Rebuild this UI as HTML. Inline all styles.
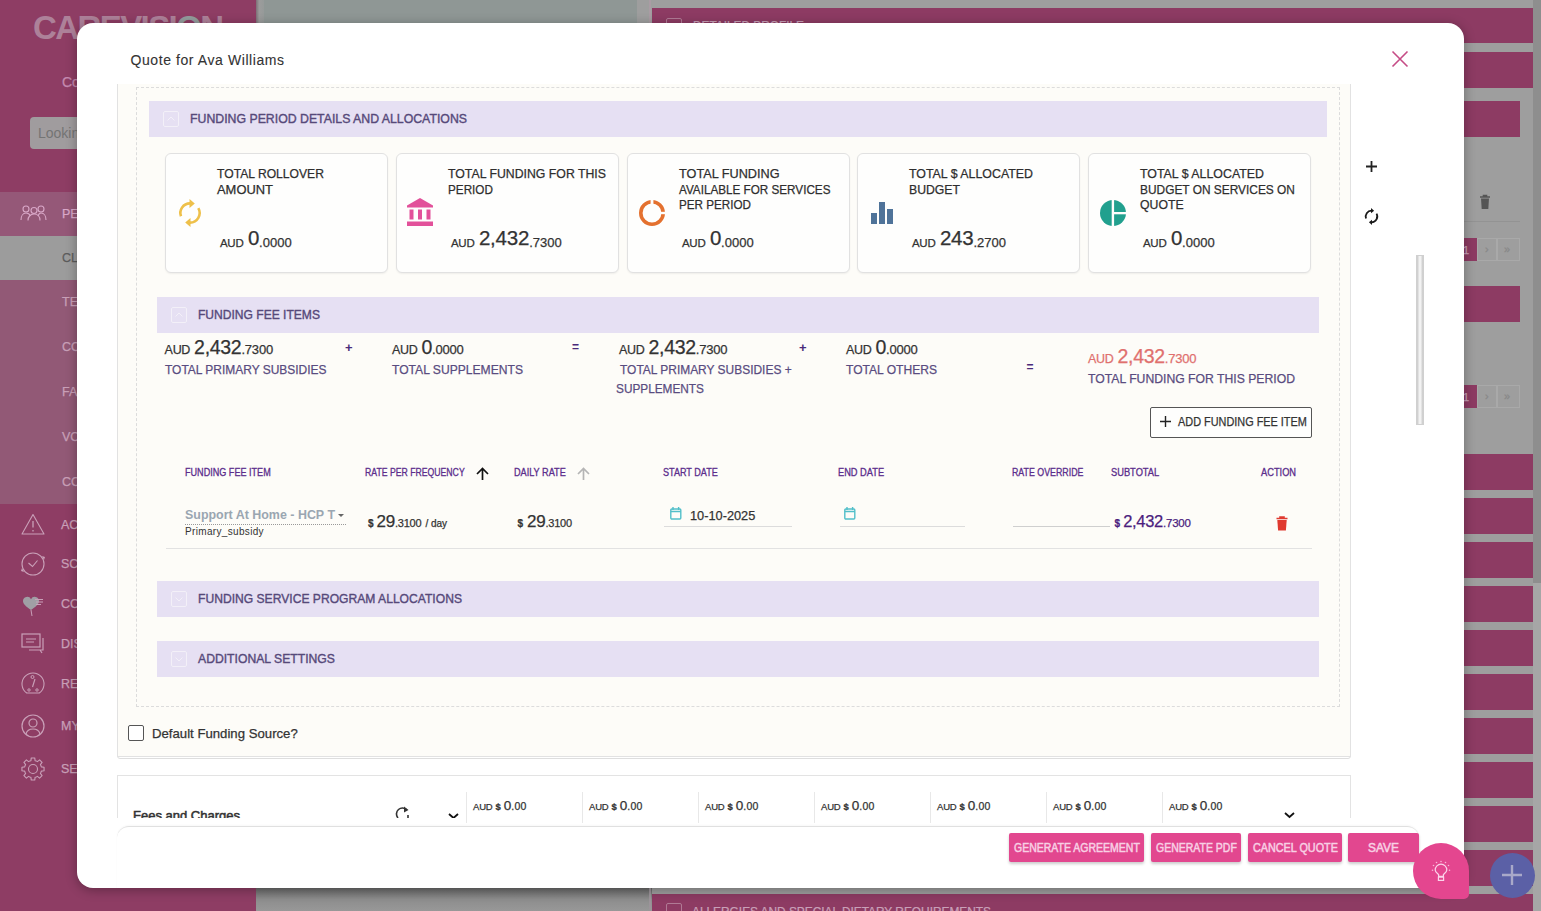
<!DOCTYPE html>
<html><head><meta charset="utf-8">
<style>
*{box-sizing:border-box;margin:0;padding:0}
html,body{width:1541px;height:911px;overflow:hidden}
body{position:relative;background:#9e9e9e;font-family:"Liberation Sans",sans-serif;color:#333}
.a{position:absolute}
svg.a{overflow:visible}
.t{position:absolute;white-space:nowrap;line-height:1;-webkit-text-stroke:0.25px currentColor}
.mt{position:absolute;white-space:nowrap;display:flex;align-items:baseline;line-height:1;-webkit-text-stroke:0.25px currentColor}
</style></head>
<body>
<div class="a" style="left:0px;top:0px;width:256px;height:911px;background:#8e3d64"></div>
<div class="a" style="left:0px;top:192px;width:256px;height:44px;background:#955878"></div>
<div class="a" style="left:0px;top:236px;width:256px;height:44px;background:#9c9c9c"></div>
<div class="a" style="left:0px;top:280px;width:256px;height:224px;background:#925976"></div>
<div class="a" style="left:256px;top:0px;width:381px;height:911px;background:#8f9795"></div>
<div class="a" style="left:256px;top:0px;width:8px;height:911px;background:linear-gradient(90deg,#7d6f76,#9c9c9c 40%,#969a99)"></div>
<div class="a" style="left:637px;top:0px;width:904px;height:911px;background:#9e9e9e"></div>
<div class="a" style="left:1533px;top:0px;width:8px;height:583px;background:#8e8e8e"></div>
<div class="a" style="left:1533px;top:583px;width:8px;height:328px;background:#a6a6a6"></div>
<div class="a" style="left:652px;top:8px;width:881px;height:35px;background:#8d3b63"></div>
<div class="a" style="left:652px;top:52px;width:881px;height:36px;background:#8d3b63"></div>
<div class="a" style="left:652px;top:101px;width:868px;height:36px;background:#8d3b63"></div>
<div class="a" style="left:652px;top:286px;width:868px;height:36px;background:#8d3b63"></div>
<div class="a" style="left:652px;top:221px;width:868px;height:1px;background:#939393"></div>
<div class="a" style="left:652px;top:454px;width:881px;height:36px;background:#8d3b63"></div>
<div class="a" style="left:652px;top:498px;width:881px;height:36px;background:#8d3b63"></div>
<div class="a" style="left:652px;top:542px;width:881px;height:36px;background:#8d3b63"></div>
<div class="a" style="left:652px;top:586px;width:881px;height:36px;background:#8d3b63"></div>
<div class="a" style="left:652px;top:630px;width:881px;height:36px;background:#8d3b63"></div>
<div class="a" style="left:652px;top:674px;width:881px;height:36px;background:#8d3b63"></div>
<div class="a" style="left:652px;top:718px;width:881px;height:36px;background:#8d3b63"></div>
<div class="a" style="left:652px;top:762px;width:881px;height:36px;background:#8d3b63"></div>
<div class="a" style="left:652px;top:806px;width:881px;height:36px;background:#8d3b63"></div>
<div class="a" style="left:652px;top:850px;width:881px;height:36px;background:#8d3b63"></div>
<div class="a" style="left:652px;top:894px;width:881px;height:36px;background:#8d3b63"></div>
<div class="a" style="left:256px;top:888px;width:396px;height:23px;background:linear-gradient(180deg,#6a6a6a,#8d8d8d 50%,#989898)"></div>
<div class="a" style="left:649px;top:0px;width:2px;height:23px;background:#aa9ca4"></div>
<div class="a" style="left:649px;top:888px;width:2px;height:23px;background:#9c949a"></div>
<div class="a" style="left:666px;top:18px;width:16px;height:16px;border:1px solid #b07a95;border-radius:2px"></div>
<div class="t" style="left:693px;top:19.00px;font-size:13px;color:#c9a0b8;font-weight:400;transform:scaleX(0.9106);transform-origin:0 0;">DETAILED PROFILE</div>
<div class="a" style="left:666px;top:903px;width:16px;height:16px;border:1px solid #b07a95;border-radius:2px"></div>
<div class="t" style="left:692px;top:905.00px;font-size:13px;color:#c9a0b8;font-weight:400;transform:scaleX(0.9128);transform-origin:0 0;">ALLERGIES AND SPECIAL DIETARY REQUIREMENTS</div>
<div class="a" style="left:1450px;top:238px;width:27px;height:23px;background:#8d3b63"></div>
<div class="a" style="left:1477px;top:238px;width:20px;height:23px;border:1px solid #a9a9a9"></div>
<div class="a" style="left:1497px;top:238px;width:23px;height:23px;border:1px solid #a9a9a9"></div>
<div class="t" style="left:1463px;top:244.69px;font-size:11px;color:#c9a0b8;font-weight:400;">1</div>
<div class="t" style="left:1485px;top:243.69px;font-size:11px;color:#888;font-weight:400;">&rsaquo;</div>
<div class="t" style="left:1504px;top:243.69px;font-size:11px;color:#888;font-weight:400;">&raquo;</div>
<div class="a" style="left:1450px;top:385px;width:27px;height:23px;background:#8d3b63"></div>
<div class="a" style="left:1477px;top:385px;width:20px;height:23px;border:1px solid #a9a9a9"></div>
<div class="a" style="left:1497px;top:385px;width:23px;height:23px;border:1px solid #a9a9a9"></div>
<div class="t" style="left:1463px;top:391.69px;font-size:11px;color:#c9a0b8;font-weight:400;">1</div>
<div class="t" style="left:1485px;top:390.69px;font-size:11px;color:#888;font-weight:400;">&rsaquo;</div>
<div class="t" style="left:1504px;top:390.69px;font-size:11px;color:#888;font-weight:400;">&raquo;</div>
<svg class="a" style="left:1479px;top:194px;" width="12" height="16" viewBox="0 0 12 16"><path d="M1 3h10M4.5 3V1.5h3V3" stroke="#555" stroke-width="1.6" fill="none"/><path d="M2 4.5h8l-.7 10.5H2.7z" fill="#555"/></svg>
<div class="t" style="left:33px;top:11.37px;font-size:33px;color:#ad8199;font-weight:700;letter-spacing:-1.59px;-webkit-text-stroke:0;">CAREVISI<span style="color:#939c9c">O</span>N</div>
<div class="t" style="left:62px;top:75.05px;font-size:14px;color:#c58ab0;font-weight:400;">Co</div>
<div class="a" style="left:30px;top:117px;width:226px;height:32px;background:#a09c9e;border-radius:4px"></div>
<div class="t" style="left:38px;top:126.15px;font-size:14px;color:#747474;font-weight:400;-webkit-text-stroke:0">Looking</div>
<svg class="a" style="left:20px;top:205px;" width="28" height="16" viewBox="0 0 28 16"><g fill="none" stroke="#d9a8c8" stroke-width="1.1"><circle cx="6" cy="4" r="3"/><circle cx="14" cy="5.5" r="3"/><circle cx="21" cy="4" r="3"/><path d="M1 15c0-4 2-7 5-7s4 2 4.5 3"/><path d="M8 15.5c0-4 2.5-6.5 6-6.5s6 2.5 6 6.5"/><path d="M18 11c.5-1.5 1.5-3 3-3 3 0 5 3 5 7"/></g></svg>
<div class="t" style="left:62px;top:208.32px;font-size:12.5px;color:#d9a8c8;font-weight:400;">PEOPLE</div>
<div class="t" style="left:62px;top:252.42px;font-size:12.5px;color:#5c5c5c;font-weight:400;">CLIENTS</div>
<div class="t" style="left:62px;top:295.92px;font-size:12.5px;color:#c9a0b8;font-weight:400;">TEAMS</div>
<div class="t" style="left:62px;top:340.92px;font-size:12.5px;color:#c9a0b8;font-weight:400;">CONTACTS</div>
<div class="t" style="left:62px;top:385.92px;font-size:12.5px;color:#c9a0b8;font-weight:400;">FACILITIES</div>
<div class="t" style="left:62px;top:430.92px;font-size:12.5px;color:#c9a0b8;font-weight:400;">VOLUNTEERS</div>
<div class="t" style="left:62px;top:475.92px;font-size:12.5px;color:#c9a0b8;font-weight:400;">CONTRACTORS</div>
<svg class="a" style="left:20px;top:512px;" width="26" height="26" viewBox="0 0 26 26"><path d="M13 2.5L2 22h22z" fill="none" stroke="#c9a0b8" stroke-width="1.1" stroke-linejoin="round"/><path d="M13 9v6.5M13 18v1.5" stroke="#c9a0b8" stroke-width="1.3"/></svg>
<svg class="a" style="left:20px;top:551px;" width="26" height="26" viewBox="0 0 26 26"><circle cx="13" cy="13" r="11" fill="none" stroke="#c9a0b8" stroke-width="1.1"/><path d="M8.5 12l4 3.5 5-6" fill="none" stroke="#c9a0b8" stroke-width="1.1"/><path d="M22 5l3 1-1 3zM4 21l-3-1 1-3z" fill="#c9a0b8"/></svg>
<svg class="a" style="left:20px;top:591px;" width="26" height="26" viewBox="0 0 26 26"><path d="M11 19C6 15.5 3 13 3 10a4.2 4.2 0 0 1 8-1.8 4.2 4.2 0 0 1 8 1.8c0 3-3 5.5-8 9z" fill="#a3b0b0" opacity=".85"/><path d="M15 8.5h8M16 11h7M16 13.5h5" stroke="#c9a0b8" stroke-width="1"/><path d="M11 19l1 6" stroke="#c9a0b8" stroke-width="1"/></svg>
<svg class="a" style="left:20px;top:631px;" width="26" height="26" viewBox="0 0 26 26"><rect x="2" y="3" width="18" height="13" fill="none" stroke="#c9a0b8" stroke-width="1.2"/><path d="M6 8h10M6 11h8M9 19h14V7M20 19l2 3" fill="none" stroke="#c9a0b8" stroke-width="1.2"/></svg>
<svg class="a" style="left:20px;top:671px;" width="26" height="26" viewBox="0 0 26 26"><path d="M6.7 22A11 11 0 1 1 19.3 22Z" fill="none" stroke="#c9a0b8" stroke-width="1.1"/><path d="M15 8l-2.5 8" stroke="#c9a0b8" stroke-width="1.2"/><circle cx="9" cy="19" r="1.2" fill="none" stroke="#c9a0b8"/><circle cx="17" cy="19" r="1.2" fill="none" stroke="#c9a0b8"/><circle cx="12.5" cy="6" r="1.5" fill="none" stroke="#c9a0b8"/></svg>
<svg class="a" style="left:20px;top:713px;" width="26" height="26" viewBox="0 0 26 26"><circle cx="13" cy="13" r="11" fill="none" stroke="#c9a0b8" stroke-width="1.2"/><circle cx="13" cy="10" r="4" fill="none" stroke="#c9a0b8" stroke-width="1.2"/><path d="M6 21c1-4 4-5 7-5s6 1 7 5" fill="none" stroke="#c9a0b8" stroke-width="1.2"/></svg>
<svg class="a" style="left:20px;top:756px;" width="26" height="26" viewBox="0 0 26 26"><path d="M21.34 10.92L24.06 11.25L24.06 14.75L21.34 15.08L20.95 16.29L20.37 17.43L22.06 19.58L19.58 22.06L17.43 20.37L16.29 20.95L15.08 21.34L14.75 24.06L11.25 24.06L10.92 21.34L9.71 20.95L8.57 20.37L6.42 22.06L3.94 19.58L5.63 17.43L5.05 16.29L4.66 15.08L1.94 14.75L1.94 11.25L4.66 10.92L5.05 9.71L5.63 8.57L3.94 6.42L6.42 3.94L8.57 5.63L9.71 5.05L10.92 4.66L11.25 1.94L14.75 1.94L15.08 4.66L16.29 5.05L17.43 5.63L19.58 3.94L22.06 6.42L20.37 8.57L20.95 9.71Z" fill="none" stroke="#c9a0b8" stroke-width="1.1" stroke-linejoin="round"/><circle cx="13" cy="13" r="4.5" fill="none" stroke="#c9a0b8" stroke-width="1.1"/></svg>
<div class="t" style="left:61px;top:518.92px;font-size:12.5px;color:#c9a0b8;font-weight:400;">ACTIVITIES</div>
<div class="t" style="left:61px;top:557.92px;font-size:12.5px;color:#c9a0b8;font-weight:400;">SCHEDULE</div>
<div class="t" style="left:61px;top:597.92px;font-size:12.5px;color:#c9a0b8;font-weight:400;">COMMUNICATION</div>
<div class="t" style="left:61px;top:637.92px;font-size:12.5px;color:#c9a0b8;font-weight:400;">DISCUSSIONS</div>
<div class="t" style="left:61px;top:677.92px;font-size:12.5px;color:#c9a0b8;font-weight:400;">REPORTS</div>
<div class="t" style="left:61px;top:719.92px;font-size:12.5px;color:#c9a0b8;font-weight:400;">MY ACCOUNT</div>
<div class="t" style="left:61px;top:762.92px;font-size:12.5px;color:#c9a0b8;font-weight:400;">SETTINGS</div>
<div class="a" style="left:77px;top:23px;width:1387px;height:865px;background:#fff;border-radius:16px;box-shadow:0 2px 12px rgba(0,0,0,.32);overflow:hidden">
<div class="a" style="left:-77px;top:-23px;width:1541px;height:911px">
<div class="t" style="left:130.5px;top:52.95px;font-size:14px;color:#333;font-weight:400;letter-spacing:0.583px;-webkit-text-stroke:0.1px currentColor;">Quote for Ava Williams</div>
<svg class="a" style="left:1392px;top:51px;" width="16" height="16" viewBox="0 0 16 16"><path d="M0.5 0.5L15.5 15.5M15.5 0.5L0.5 15.5" stroke="#c64c86" stroke-width="1.6"/></svg>
<svg class="a" style="left:1366px;top:161px;" width="11" height="11" viewBox="0 0 11 11"><path d="M5.5 0v11M0 5.5h11" stroke="#222" stroke-width="1.8"/></svg>
<svg class="a" style="left:0;top:0" width="1541" height="911"><path d="M1366.05 218.48A5.8 5.8 0 0 1 1371.49 210.70" fill="none" stroke="#1a1a1a" stroke-width="1.8"/><path d="M1376.52 213.60A5.8 5.8 0 0 1 1371.51 222.30" fill="none" stroke="#1a1a1a" stroke-width="1.8"/><path d="M1371.00 208.03L1374.11 210.70L1371.00 213.37z" fill="#1a1a1a"/><path d="M1372.00 219.63L1368.89 222.30L1372.00 224.97z" fill="#1a1a1a"/></svg>
<div class="a" style="left:1416px;top:255px;width:8px;height:170px;background:linear-gradient(90deg,#c8c8c8,#f2f2f2 40%,#f2f2f2 60%,#c8c8c8);border:1px solid #d0d0d0"></div>
<div class="a" style="left:0;top:0;width:1541px;height:911px;clip-path:inset(84px 0 85px 0)">
<div class="a" style="left:117px;top:60px;width:1234px;height:699px;border:1px solid #dedede;border-radius:0 0 3px 3px;background:#fff"></div>
<div class="a" style="left:117px;top:60px;width:1234px;height:697px;background:#fdfcf8;border:1px solid #e2e2e2"></div>
<div class="a" style="left:136px;top:87px;width:1204px;height:620px;border:1px dashed #dcdcdc"></div>
<div class="a" style="left:149px;top:101px;width:1178px;height:36px;background:#e6e0f3"></div>
<div class="a" style="left:163px;top:111px;width:16px;height:16px;border:1px solid #f3f0f8;border-radius:2px"></div>
<svg class="a" style="left:167px;top:116px;" width="8" height="5" viewBox="0 0 8 5"><path d="M0.5 4.5L4 1l3.5 3.5" fill="none" stroke="#f3f0f8" stroke-width="1"/></svg>
<div class="t" style="left:190px;top:112.07px;font-size:13.5px;color:#56497a;font-weight:400;-webkit-text-stroke:0.4px currentColor;transform:scaleX(0.9109);transform-origin:0 0;">FUNDING PERIOD DETAILS AND ALLOCATIONS</div>
<div class="a" style="left:165px;top:153px;width:223px;height:120px;background:#fefefd;border:1px solid #e1e1e1;border-radius:6px;box-shadow:0 1px 2px rgba(0,0,0,.06)"></div>
<div class="t" style="left:217px;top:167.00px;font-size:13px;color:#2e2e2e;font-weight:400;transform:scaleX(0.9331);transform-origin:0 0;">TOTAL ROLLOVER</div>
<div class="t" style="left:217px;top:182.50px;font-size:13px;color:#2e2e2e;font-weight:400;transform:scaleX(0.9945);transform-origin:0 0;">AMOUNT</div>
<div class="mt" style="left:220px;top:229.65px;color:#333;"><span style="font-size:11.5px;font-weight:400;letter-spacing:-0.3px;margin-left:0px;line-height:1;">AUD</span><span style="font-size:20.5px;font-weight:400;letter-spacing:-0.2px;margin-left:4.5px;line-height:1;position:relative;top:-2px">0</span><span style="font-size:13px;font-weight:400;letter-spacing:0px;margin-left:0px;line-height:1;">.0000</span></div>
<div class="a" style="left:396px;top:153px;width:223px;height:120px;background:#fefefd;border:1px solid #e1e1e1;border-radius:6px;box-shadow:0 1px 2px rgba(0,0,0,.06)"></div>
<div class="t" style="left:448px;top:167.00px;font-size:13px;color:#2e2e2e;font-weight:400;transform:scaleX(0.9455);transform-origin:0 0;">TOTAL FUNDING FOR THIS</div>
<div class="t" style="left:448px;top:182.50px;font-size:13px;color:#2e2e2e;font-weight:400;transform:scaleX(0.9016);transform-origin:0 0;">PERIOD</div>
<div class="mt" style="left:451px;top:229.65px;color:#333;"><span style="font-size:11.5px;font-weight:400;letter-spacing:-0.3px;margin-left:0px;line-height:1;">AUD</span><span style="font-size:20.5px;font-weight:400;letter-spacing:-0.2px;margin-left:4.5px;line-height:1;position:relative;top:-2px">2,432</span><span style="font-size:13px;font-weight:400;letter-spacing:0px;margin-left:0px;line-height:1;">.7300</span></div>
<div class="a" style="left:627px;top:153px;width:223px;height:120px;background:#fefefd;border:1px solid #e1e1e1;border-radius:6px;box-shadow:0 1px 2px rgba(0,0,0,.06)"></div>
<div class="t" style="left:679px;top:167.00px;font-size:13px;color:#2e2e2e;font-weight:400;transform:scaleX(0.9754);transform-origin:0 0;">TOTAL FUNDING</div>
<div class="t" style="left:679px;top:182.50px;font-size:13px;color:#2e2e2e;font-weight:400;transform:scaleX(0.8996);transform-origin:0 0;">AVAILABLE FOR SERVICES</div>
<div class="t" style="left:679px;top:198.00px;font-size:13px;color:#2e2e2e;font-weight:400;transform:scaleX(0.8971);transform-origin:0 0;">PER PERIOD</div>
<div class="mt" style="left:682px;top:229.65px;color:#333;"><span style="font-size:11.5px;font-weight:400;letter-spacing:-0.3px;margin-left:0px;line-height:1;">AUD</span><span style="font-size:20.5px;font-weight:400;letter-spacing:-0.2px;margin-left:4.5px;line-height:1;position:relative;top:-2px">0</span><span style="font-size:13px;font-weight:400;letter-spacing:0px;margin-left:0px;line-height:1;">.0000</span></div>
<div class="a" style="left:857px;top:153px;width:223px;height:120px;background:#fefefd;border:1px solid #e1e1e1;border-radius:6px;box-shadow:0 1px 2px rgba(0,0,0,.06)"></div>
<div class="t" style="left:909px;top:167.00px;font-size:13px;color:#2e2e2e;font-weight:400;transform:scaleX(0.9516);transform-origin:0 0;">TOTAL $ ALLOCATED</div>
<div class="t" style="left:909px;top:182.50px;font-size:13px;color:#2e2e2e;font-weight:400;transform:scaleX(0.9411);transform-origin:0 0;">BUDGET</div>
<div class="mt" style="left:912px;top:229.65px;color:#333;"><span style="font-size:11.5px;font-weight:400;letter-spacing:-0.3px;margin-left:0px;line-height:1;">AUD</span><span style="font-size:20.5px;font-weight:400;letter-spacing:-0.2px;margin-left:4.5px;line-height:1;position:relative;top:-2px">243</span><span style="font-size:13px;font-weight:400;letter-spacing:0px;margin-left:0px;line-height:1;">.2700</span></div>
<div class="a" style="left:1088px;top:153px;width:223px;height:120px;background:#fefefd;border:1px solid #e1e1e1;border-radius:6px;box-shadow:0 1px 2px rgba(0,0,0,.06)"></div>
<div class="t" style="left:1140px;top:167.00px;font-size:13px;color:#2e2e2e;font-weight:400;transform:scaleX(0.9516);transform-origin:0 0;">TOTAL $ ALLOCATED</div>
<div class="t" style="left:1140px;top:182.50px;font-size:13px;color:#2e2e2e;font-weight:400;transform:scaleX(0.9154);transform-origin:0 0;">BUDGET ON SERVICES ON</div>
<div class="t" style="left:1140px;top:198.00px;font-size:13px;color:#2e2e2e;font-weight:400;transform:scaleX(0.9426);transform-origin:0 0;">QUOTE</div>
<div class="mt" style="left:1143px;top:229.65px;color:#333;"><span style="font-size:11.5px;font-weight:400;letter-spacing:-0.3px;margin-left:0px;line-height:1;">AUD</span><span style="font-size:20.5px;font-weight:400;letter-spacing:-0.2px;margin-left:4.5px;line-height:1;position:relative;top:-2px">0</span><span style="font-size:13px;font-weight:400;letter-spacing:0px;margin-left:0px;line-height:1;">.0000</span></div>
<svg class="a" style="left:0;top:0" width="1541" height="911"><path d="M180.98 216.28A9.6 9.6 0 0 1 189.99 203.40" fill="none" stroke="#eec04a" stroke-width="2.6"/><path d="M198.31 208.20A9.6 9.6 0 0 1 190.01 222.60" fill="none" stroke="#eec04a" stroke-width="2.6"/><path d="M189.50 198.89L194.80 203.40L189.50 207.91z" fill="#eec04a"/><path d="M190.50 218.09L185.20 222.60L190.50 227.11z" fill="#eec04a"/></svg>
<svg class="a" style="left:407px;top:198px;" width="26" height="28" viewBox="0 0 26 28"><path d="M13 0L0 7.5v2h26v-2z" fill="#e2519a"/><rect x="2.5" y="11.5" width="4" height="10" fill="#e2519a"/><rect x="11" y="11.5" width="4" height="10" fill="#e2519a"/><rect x="19.5" y="11.5" width="4" height="10" fill="#e2519a"/><rect x="0" y="23.5" width="26" height="4.5" fill="#e2519a"/></svg>
<svg class="a" style="left:639px;top:200px;" width="26" height="26" viewBox="0 0 26 26"><circle cx="13" cy="13" r="11.2" fill="none" stroke="#e4712f" stroke-width="3.6"/><rect x="11.6" y="0" width="2.8" height="5" fill="#fefefd"/><rect x="21" y="11.8" width="5" height="2.4" fill="#fefefd"/></svg>
<svg class="a" style="left:871px;top:202px;" width="23" height="23" viewBox="0 0 23 23"><rect x="0" y="11" width="6" height="11" fill="#4f7399"/><rect x="8" y="0" width="6" height="22" fill="#4f7399"/><rect x="16" y="7" width="6" height="15" fill="#4f7399"/></svg>
<svg class="a" style="left:1100px;top:200px;" width="26" height="26" viewBox="0 0 26 26"><circle cx="13" cy="13" r="13" fill="#21a08e"/><rect x="11.7" y="-1" width="2.4" height="28" fill="#fefefd"/><rect x="13" y="12" width="14" height="2.3" fill="#fefefd"/></svg>
<div class="a" style="left:157px;top:297px;width:1162px;height:36px;background:#e6e0f3"></div>
<div class="a" style="left:171px;top:307px;width:16px;height:16px;border:1px solid #f3f0f8;border-radius:2px"></div>
<svg class="a" style="left:175px;top:312px;" width="8" height="5" viewBox="0 0 8 5"><path d="M0.5 4.5L4 1l3.5 3.5" fill="none" stroke="#f3f0f8" stroke-width="1"/></svg>
<div class="t" style="left:198px;top:308.07px;font-size:13.5px;color:#56497a;font-weight:400;-webkit-text-stroke:0.4px currentColor;transform:scaleX(0.8934);transform-origin:0 0;">FUNDING FEE ITEMS</div>
<div class="mt" style="left:164.6px;top:338.29px;color:#333;"><span style="font-size:12.5px;font-weight:400;letter-spacing:-0.3px;margin-left:0px;line-height:1;">AUD</span><span style="font-size:19.5px;font-weight:400;letter-spacing:-0.3px;margin-left:4px;line-height:1;">2,432</span><span style="font-size:13px;font-weight:400;letter-spacing:-0.2px;margin-left:0px;line-height:1;">.7300</span></div>
<div class="t" style="left:165px;top:363.00px;font-size:13px;color:#594c80;font-weight:400;transform:scaleX(0.9202);transform-origin:0 0;">TOTAL PRIMARY SUBSIDIES</div>
<div class="t" style="left:345px;top:340.50px;font-size:13px;color:#4a2a7a;font-weight:700;-webkit-text-stroke:0;">+</div>
<div class="mt" style="left:392px;top:338.29px;color:#333;"><span style="font-size:12.5px;font-weight:400;letter-spacing:-0.3px;margin-left:0px;line-height:1;">AUD</span><span style="font-size:19.5px;font-weight:400;letter-spacing:-0.3px;margin-left:4px;line-height:1;">0</span><span style="font-size:13px;font-weight:400;letter-spacing:-0.2px;margin-left:0px;line-height:1;">.0000</span></div>
<div class="t" style="left:392px;top:363.00px;font-size:13px;color:#594c80;font-weight:400;transform:scaleX(0.9312);transform-origin:0 0;">TOTAL SUPPLEMENTS</div>
<div class="t" style="left:572px;top:340.84px;font-size:12px;color:#4a2a7a;font-weight:700;-webkit-text-stroke:0;">=</div>
<div class="mt" style="left:619px;top:338.29px;color:#333;"><span style="font-size:12.5px;font-weight:400;letter-spacing:-0.3px;margin-left:0px;line-height:1;">AUD</span><span style="font-size:19.5px;font-weight:400;letter-spacing:-0.3px;margin-left:4px;line-height:1;">2,432</span><span style="font-size:13px;font-weight:400;letter-spacing:-0.2px;margin-left:0px;line-height:1;">.7300</span></div>
<div class="t" style="left:620px;top:363.00px;font-size:13px;color:#594c80;font-weight:400;transform:scaleX(0.9191);transform-origin:0 0;">TOTAL PRIMARY SUBSIDIES +</div>
<div class="t" style="left:616px;top:382.00px;font-size:13px;color:#594c80;font-weight:400;transform:scaleX(0.9084);transform-origin:0 0;">SUPPLEMENTS</div>
<div class="t" style="left:799px;top:340.50px;font-size:13px;color:#4a2a7a;font-weight:700;-webkit-text-stroke:0;">+</div>
<div class="mt" style="left:846px;top:338.29px;color:#333;"><span style="font-size:12.5px;font-weight:400;letter-spacing:-0.3px;margin-left:0px;line-height:1;">AUD</span><span style="font-size:19.5px;font-weight:400;letter-spacing:-0.3px;margin-left:4px;line-height:1;">0</span><span style="font-size:13px;font-weight:400;letter-spacing:-0.2px;margin-left:0px;line-height:1;">.0000</span></div>
<div class="t" style="left:846px;top:363.00px;font-size:13px;color:#594c80;font-weight:400;transform:scaleX(0.9282);transform-origin:0 0;">TOTAL OTHERS</div>
<div class="t" style="left:1026.5px;top:361.34px;font-size:12px;color:#4a2a7a;font-weight:700;-webkit-text-stroke:0;">=</div>
<div class="mt" style="left:1088px;top:347.19px;color:#e0706e;"><span style="font-size:12.5px;font-weight:400;letter-spacing:-0.3px;margin-left:0px;line-height:1;">AUD</span><span style="font-size:19.5px;font-weight:400;letter-spacing:-0.3px;margin-left:4px;line-height:1;">2,432</span><span style="font-size:13px;font-weight:400;letter-spacing:-0.2px;margin-left:0px;line-height:1;">.7300</span></div>
<div class="t" style="left:1088px;top:371.60px;font-size:13px;color:#594c80;font-weight:400;transform:scaleX(0.9385);transform-origin:0 0;">TOTAL FUNDING FOR THIS PERIOD</div>
<div class="a" style="left:1150px;top:407px;width:162px;height:31px;border:1px solid #555;border-radius:2px;background:#fefefd"></div>
<svg class="a" style="left:1160px;top:416px;" width="11" height="11" viewBox="0 0 11 11"><path d="M5.5 0v11M0 5.5h11" stroke="#222" stroke-width="1.4"/></svg>
<div class="t" style="left:1178px;top:416.04px;font-size:12px;color:#333;font-weight:400;transform:scaleX(0.9074);transform-origin:0 0;">ADD FUNDING FEE ITEM</div>
<div class="t" style="left:185px;top:467.54px;font-size:10px;color:#5b2d8c;font-weight:400;-webkit-text-stroke:0.3px currentColor;transform:scaleX(0.9076);transform-origin:0 0;">FUNDING FEE ITEM</div>
<div class="t" style="left:364.7px;top:467.54px;font-size:10px;color:#5b2d8c;font-weight:400;-webkit-text-stroke:0.3px currentColor;transform:scaleX(0.8681);transform-origin:0 0;">RATE PER FREQUENCY</div>
<svg class="a" style="left:476px;top:467px;" width="13" height="13" viewBox="0 0 13 13"><path d="M6.5 13V1.5M1 7l5.5-5.5L12 7" fill="none" stroke="#111" stroke-width="1.7"/></svg>
<div class="t" style="left:514px;top:467.54px;font-size:10px;color:#5b2d8c;font-weight:400;-webkit-text-stroke:0.3px currentColor;transform:scaleX(0.9125);transform-origin:0 0;">DAILY RATE</div>
<svg class="a" style="left:577px;top:467px;" width="13" height="13" viewBox="0 0 13 13"><path d="M6.5 13V1.5M1 7l5.5-5.5L12 7" fill="none" stroke="#b5b5b5" stroke-width="1.7"/></svg>
<div class="t" style="left:663px;top:467.54px;font-size:10px;color:#5b2d8c;font-weight:400;-webkit-text-stroke:0.3px currentColor;transform:scaleX(0.9062);transform-origin:0 0;">START DATE</div>
<div class="t" style="left:837.6px;top:467.54px;font-size:10px;color:#5b2d8c;font-weight:400;-webkit-text-stroke:0.3px currentColor;transform:scaleX(0.9260);transform-origin:0 0;">END DATE</div>
<div class="t" style="left:1012px;top:467.54px;font-size:10px;color:#5b2d8c;font-weight:400;-webkit-text-stroke:0.3px currentColor;transform:scaleX(0.8822);transform-origin:0 0;">RATE OVERRIDE</div>
<div class="t" style="left:1111.3px;top:467.54px;font-size:10px;color:#5b2d8c;font-weight:400;-webkit-text-stroke:0.3px currentColor;transform:scaleX(0.9300);transform-origin:0 0;">SUBTOTAL</div>
<div class="t" style="left:1261px;top:467.54px;font-size:10px;color:#5b2d8c;font-weight:400;-webkit-text-stroke:0.3px currentColor;transform:scaleX(0.9275);transform-origin:0 0;">ACTION</div>
<div class="t" style="left:185px;top:508.20px;font-size:13px;color:#9aa6b1;font-weight:700;-webkit-text-stroke:0;transform:scaleX(0.9571);transform-origin:0 0;">Support At Home - HCP T</div>
<svg class="a" style="left:338px;top:513.5px;" width="6" height="3" viewBox="0 0 6 3"><path d="M0 0h6L3 3z" fill="#666"/></svg>
<div class="a" style="left:185px;top:524px;width:161px;height:1px;border-top:1px dotted #999"></div>
<div class="t" style="left:185px;top:526.53px;font-size:10px;color:#333;font-weight:400;letter-spacing:0.334px;-webkit-text-stroke:0">Primary_subsidy</div>
<div class="mt" style="left:368px;top:513.01px;color:#333;"><span style="font-size:10px;font-weight:700;letter-spacing:0px;margin-left:0px;line-height:1;">$</span><span style="font-size:10px;font-weight:400;letter-spacing:0px;margin-left:0px;line-height:1;"> </span><span style="font-size:17px;font-weight:400;letter-spacing:-0.3px;margin-left:3px;line-height:1;">29</span><span style="font-size:11px;font-weight:400;letter-spacing:-0.2px;margin-left:0px;line-height:1;">.3100</span><span style="font-size:10px;font-weight:400;letter-spacing:0px;margin-left:4px;line-height:1;">/ day</span></div>
<div class="mt" style="left:517.5px;top:513.01px;color:#333;"><span style="font-size:10px;font-weight:700;letter-spacing:0px;margin-left:0px;line-height:1;">$</span><span style="font-size:17px;font-weight:400;letter-spacing:-0.3px;margin-left:4px;line-height:1;">29</span><span style="font-size:11px;font-weight:400;letter-spacing:-0.2px;margin-left:0px;line-height:1;">.3100</span></div>
<svg class="a" style="left:670px;top:507px;" width="12" height="13" viewBox="0 0 12 13"><rect x="0.8" y="2" width="10" height="10" rx="1" fill="none" stroke="#52bfc9" stroke-width="1.4"/><path d="M0.8 4.5h10M3 0v3M8.6 0v3" stroke="#52bfc9" stroke-width="1.4"/></svg>
<div class="t" style="left:690px;top:509.00px;font-size:13px;color:#333;font-weight:400;transform:scaleX(0.9823);transform-origin:0 0;">10-10-2025</div>
<div class="a" style="left:664px;top:526px;width:128px;height:1px;background:#dcdcdc"></div>
<svg class="a" style="left:844px;top:507px;" width="12" height="13" viewBox="0 0 12 13"><rect x="0.8" y="2" width="10" height="10" rx="1" fill="none" stroke="#52bfc9" stroke-width="1.4"/><path d="M0.8 4.5h10M3 0v3M8.6 0v3" stroke="#52bfc9" stroke-width="1.4"/></svg>
<div class="a" style="left:839.6px;top:526px;width:125px;height:1px;background:#dcdcdc"></div>
<div class="a" style="left:1013px;top:526px;width:97px;height:1px;background:#cfcfcf"></div>
<div class="mt" style="left:1114.6px;top:513.23px;color:#4b1d7e;"><span style="font-size:10px;font-weight:700;letter-spacing:0px;margin-left:0px;line-height:1;">$</span><span style="font-size:16.5px;font-weight:400;letter-spacing:-0.3px;margin-left:3px;line-height:1;">2,432</span><span style="font-size:11.5px;font-weight:400;letter-spacing:-0.2px;margin-left:0px;line-height:1;">.7300</span></div>
<svg class="a" style="left:1276px;top:516px;" width="12" height="15" viewBox="0 0 12 15"><path d="M0.5 2.5h11M4 2.5V1h4v1.5" stroke="#e03a30" stroke-width="1.6" fill="none"/><path d="M1.3 4h9.4l-.8 10.5H2.1z" fill="#e03a30"/></svg>
<div class="a" style="left:166px;top:548px;width:1146px;height:1px;background:#e2e2e2"></div>
<div class="a" style="left:157px;top:581px;width:1162px;height:36px;background:#e6e0f3"></div>
<div class="a" style="left:171px;top:591px;width:16px;height:16px;border:1px solid #f3f0f8;border-radius:2px"></div>
<svg class="a" style="left:175px;top:597px;" width="8" height="5" viewBox="0 0 8 5"><path d="M0.5 0.5L4 4l3.5-3.5" fill="none" stroke="#f3f0f8" stroke-width="1"/></svg>
<div class="t" style="left:197.5px;top:592.07px;font-size:13.5px;color:#56497a;font-weight:400;-webkit-text-stroke:0.4px currentColor;transform:scaleX(0.8969);transform-origin:0 0;">FUNDING SERVICE PROGRAM ALLOCATIONS</div>
<div class="a" style="left:157px;top:641px;width:1162px;height:36px;background:#e6e0f3"></div>
<div class="a" style="left:171px;top:651px;width:16px;height:16px;border:1px solid #f3f0f8;border-radius:2px"></div>
<svg class="a" style="left:175px;top:657px;" width="8" height="5" viewBox="0 0 8 5"><path d="M0.5 0.5L4 4l3.5-3.5" fill="none" stroke="#f3f0f8" stroke-width="1"/></svg>
<div class="t" style="left:197.5px;top:652.07px;font-size:13.5px;color:#56497a;font-weight:400;-webkit-text-stroke:0.4px currentColor;transform:scaleX(0.9024);transform-origin:0 0;">ADDITIONAL SETTINGS</div>
<div class="a" style="left:128px;top:725px;width:16px;height:16px;border:1px solid #555;border-radius:2px;background:#fff"></div>
<div class="t" style="left:152px;top:726.97px;font-size:13.5px;color:#333;font-weight:400;transform:scaleX(0.9760);transform-origin:0 0;">Default Funding Source?</div>
<div class="a" style="left:0;top:0;width:1541px;height:911px;clip-path:inset(0 0 93px 0)">
<div class="a" style="left:117px;top:774.5px;width:1234px;height:80px;background:#fff;border:1px solid #e3e3e3"></div>
<div class="t" style="left:133px;top:809.07px;font-size:13.5px;color:#333;font-weight:400;-webkit-text-stroke:0.55px currentColor;transform:scaleX(0.9637);transform-origin:0 0;">Fees and Charges</div>
<svg class="a" style="left:396px;top:806px;" width="14" height="12" viewBox="0 0 14 12"><path d="M2 12A5.5 5.5 0 0 1 11 4" fill="none" stroke="#333" stroke-width="1.6"/><path d="M8 0.5l4.5 3.5-4.5 2.5z" fill="#333"/><path d="M12 9v3" stroke="#333" stroke-width="1.6"/></svg>
<svg class="a" style="left:448px;top:813px;" width="11" height="6" viewBox="0 0 11 6"><path d="M1 1l4.5 4L10 1" fill="none" stroke="#111" stroke-width="1.8"/></svg>
</div>
<div class="a" style="left:465.5px;top:792px;width:1px;height:31px;background:#e8e8e8"></div>
<div class="mt" style="left:473.0px;top:798.57px;color:#333;"><span style="font-size:9.5px;font-weight:400;letter-spacing:-0.2px;margin-left:0px;line-height:1;">AUD</span><span style="font-size:9.5px;font-weight:700;letter-spacing:0px;margin-left:3px;line-height:1;">$</span><span style="font-size:13.5px;font-weight:400;letter-spacing:0px;margin-left:3px;line-height:1;">0</span><span style="font-size:10.5px;font-weight:400;letter-spacing:0.2px;margin-left:0px;line-height:1;">.00</span></div>
<div class="a" style="left:581.5px;top:792px;width:1px;height:31px;background:#e8e8e8"></div>
<div class="mt" style="left:589.0px;top:798.57px;color:#333;"><span style="font-size:9.5px;font-weight:400;letter-spacing:-0.2px;margin-left:0px;line-height:1;">AUD</span><span style="font-size:9.5px;font-weight:700;letter-spacing:0px;margin-left:3px;line-height:1;">$</span><span style="font-size:13.5px;font-weight:400;letter-spacing:0px;margin-left:3px;line-height:1;">0</span><span style="font-size:10.5px;font-weight:400;letter-spacing:0.2px;margin-left:0px;line-height:1;">.00</span></div>
<div class="a" style="left:697.5px;top:792px;width:1px;height:31px;background:#e8e8e8"></div>
<div class="mt" style="left:705.0px;top:798.57px;color:#333;"><span style="font-size:9.5px;font-weight:400;letter-spacing:-0.2px;margin-left:0px;line-height:1;">AUD</span><span style="font-size:9.5px;font-weight:700;letter-spacing:0px;margin-left:3px;line-height:1;">$</span><span style="font-size:13.5px;font-weight:400;letter-spacing:0px;margin-left:3px;line-height:1;">0</span><span style="font-size:10.5px;font-weight:400;letter-spacing:0.2px;margin-left:0px;line-height:1;">.00</span></div>
<div class="a" style="left:813.5px;top:792px;width:1px;height:31px;background:#e8e8e8"></div>
<div class="mt" style="left:821.0px;top:798.57px;color:#333;"><span style="font-size:9.5px;font-weight:400;letter-spacing:-0.2px;margin-left:0px;line-height:1;">AUD</span><span style="font-size:9.5px;font-weight:700;letter-spacing:0px;margin-left:3px;line-height:1;">$</span><span style="font-size:13.5px;font-weight:400;letter-spacing:0px;margin-left:3px;line-height:1;">0</span><span style="font-size:10.5px;font-weight:400;letter-spacing:0.2px;margin-left:0px;line-height:1;">.00</span></div>
<div class="a" style="left:929.5px;top:792px;width:1px;height:31px;background:#e8e8e8"></div>
<div class="mt" style="left:937.0px;top:798.57px;color:#333;"><span style="font-size:9.5px;font-weight:400;letter-spacing:-0.2px;margin-left:0px;line-height:1;">AUD</span><span style="font-size:9.5px;font-weight:700;letter-spacing:0px;margin-left:3px;line-height:1;">$</span><span style="font-size:13.5px;font-weight:400;letter-spacing:0px;margin-left:3px;line-height:1;">0</span><span style="font-size:10.5px;font-weight:400;letter-spacing:0.2px;margin-left:0px;line-height:1;">.00</span></div>
<div class="a" style="left:1045.5px;top:792px;width:1px;height:31px;background:#e8e8e8"></div>
<div class="mt" style="left:1053.0px;top:798.57px;color:#333;"><span style="font-size:9.5px;font-weight:400;letter-spacing:-0.2px;margin-left:0px;line-height:1;">AUD</span><span style="font-size:9.5px;font-weight:700;letter-spacing:0px;margin-left:3px;line-height:1;">$</span><span style="font-size:13.5px;font-weight:400;letter-spacing:0px;margin-left:3px;line-height:1;">0</span><span style="font-size:10.5px;font-weight:400;letter-spacing:0.2px;margin-left:0px;line-height:1;">.00</span></div>
<div class="a" style="left:1161.5px;top:792px;width:1px;height:31px;background:#e8e8e8"></div>
<div class="mt" style="left:1169.0px;top:798.57px;color:#333;"><span style="font-size:9.5px;font-weight:400;letter-spacing:-0.2px;margin-left:0px;line-height:1;">AUD</span><span style="font-size:9.5px;font-weight:700;letter-spacing:0px;margin-left:3px;line-height:1;">$</span><span style="font-size:13.5px;font-weight:400;letter-spacing:0px;margin-left:3px;line-height:1;">0</span><span style="font-size:10.5px;font-weight:400;letter-spacing:0.2px;margin-left:0px;line-height:1;">.00</span></div>
<svg class="a" style="left:1284px;top:812px;" width="11" height="6" viewBox="0 0 11 6"><path d="M1 1l4.5 4L10 1" fill="none" stroke="#111" stroke-width="1.8"/></svg>
</div>
<div class="a" style="left:117px;top:826px;width:1302px;height:80px;background:#fff;border-top:1px solid #e0e0e0;border-radius:12px 12px 0 0;box-shadow:0 -1px 2px rgba(0,0,0,.03)"></div>
<div class="a" style="left:1009px;top:833px;width:135px;height:29px;background:#e2478f;border-radius:2px;box-shadow:0 2px 3px rgba(0,0,0,.2)"></div>
<div class="t" style="left:1014.0px;top:842.14px;font-size:12px;color:#f8d0e4;font-weight:400;-webkit-text-stroke:0.5px currentColor;transform:scaleX(0.8750);transform-origin:0 0;">GENERATE AGREEMENT</div>
<div class="a" style="left:1151px;top:833px;width:90px;height:29px;background:#e2478f;border-radius:2px;box-shadow:0 2px 3px rgba(0,0,0,.2)"></div>
<div class="t" style="left:1156.0px;top:842.14px;font-size:12px;color:#f8d0e4;font-weight:400;-webkit-text-stroke:0.5px currentColor;transform:scaleX(0.8742);transform-origin:0 0;">GENERATE PDF</div>
<div class="a" style="left:1247.5px;top:833px;width:94px;height:29px;background:#e2478f;border-radius:2px;box-shadow:0 2px 3px rgba(0,0,0,.2)"></div>
<div class="t" style="left:1252.5px;top:842.14px;font-size:12px;color:#f8d0e4;font-weight:400;-webkit-text-stroke:0.5px currentColor;transform:scaleX(0.9004);transform-origin:0 0;">CANCEL QUOTE</div>
<div class="a" style="left:1347.5px;top:833px;width:71px;height:29px;background:#e2478f;border-radius:2px;box-shadow:0 2px 3px rgba(0,0,0,.2)"></div>
<div class="t" style="left:1368.0px;top:842.14px;font-size:12px;color:#f8d0e4;font-weight:400;-webkit-text-stroke:0.5px currentColor;transform:scaleX(0.9945);transform-origin:0 0;">SAVE</div>
</div></div>
<div class="a" style="left:1413px;top:843px;width:56px;height:56px;background:#e4468f;border-radius:28px 28px 5px 28px"></div>
<svg class="a" style="left:1430px;top:859px;" width="22" height="24" viewBox="0 0 22 24"><g fill="none" stroke="#fbd3ea" stroke-width="1.2"><path d="M8.6 17.4V15.6C7.2 14.2 5.2 12.8 5.2 10.9A5.8 5.8 0 0 1 16.8 10.9C16.8 12.8 14.8 14.2 13.4 15.6V17.4Z"/><path d="M8.4 18.2h5.2v3.2h-5.2z"/></g><g fill="#f7b6d6"><circle cx="6.5" cy="3.5" r=".8"/><circle cx="11" cy="2.5" r=".8"/><circle cx="15.5" cy="3.5" r=".8"/><circle cx="3.5" cy="6.5" r=".8"/><circle cx="18.5" cy="6.5" r=".8"/><circle cx="2.5" cy="11.3" r=".8"/><circle cx="19.5" cy="11.3" r=".8"/></g></svg>
<div class="a" style="left:1490px;top:853px;width:45px;height:45px;border-radius:50%;background:#5b60a6"></div>
<svg class="a" style="left:1501px;top:864px;" width="22" height="22" viewBox="0 0 22 22"><path d="M11 1v20M1 11h20" stroke="#a9a9c9" stroke-width="2.4"/></svg>
</body></html>
